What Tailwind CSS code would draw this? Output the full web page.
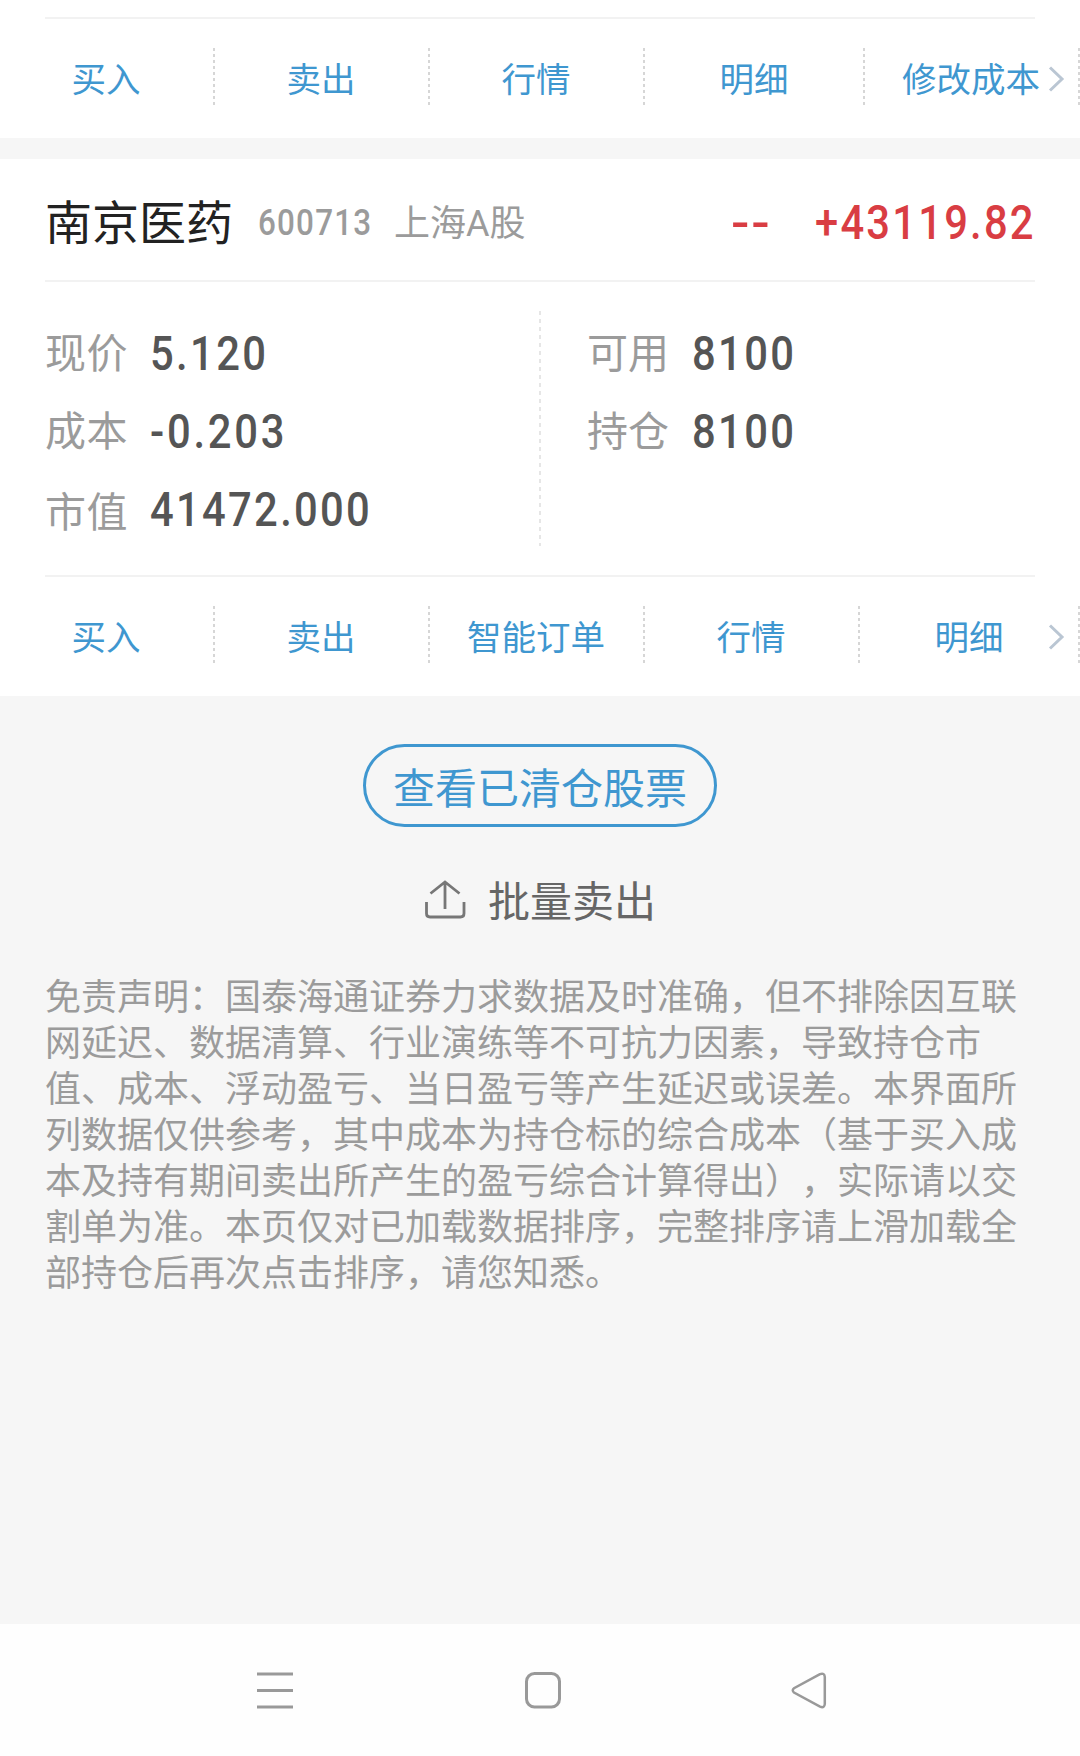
<!DOCTYPE html>
<html lang="zh-CN">
<head>
    <meta charset="UTF-8">
    <meta name="viewport" content="width=device-width, initial-scale=1.0">
    <title>持仓</title>
    <script src="https://cdn.jsdelivr.net/npm/@tailwindcss/browser@4"></script>
</head>
<body class="bg-[#f6f6f6] font-['Roboto','Noto_Sans_CJK_SC',sans-serif] [text-spacing-trim:space-all]">
    <div class="w-[1080px] h-[1756px] flex flex-col overflow-hidden">

        <!-- Previous holding: action bar -->
        <section class="bg-white pt-[17px]">
            <div class="mx-[45px] h-[2px] bg-[#f2f2f2]"></div>
            <nav class="relative flex h-[119px] pt-[29px] text-[34.5px] leading-[65px] text-[#3f97d0] text-center whitespace-nowrap">
                <a class="w-[212px]">买入</a>
                <i class="ml-px w-[2px] h-[58px] bg-[repeating-linear-gradient(#d6d6d6_0_3px,transparent_3px_6px)]"></i>
                <a class="w-[212px]">卖出</a>
                <i class="ml-px w-[2px] h-[58px] bg-[repeating-linear-gradient(#d6d6d6_0_3px,transparent_3px_6px)]"></i>
                <a class="w-[212px]">行情</a>
                <i class="ml-px w-[2px] h-[58px] bg-[repeating-linear-gradient(#d6d6d6_0_3px,transparent_3px_6px)]"></i>
                <a class="w-[218px]">明细</a>
                <i class="w-[2px] h-[58px] bg-[repeating-linear-gradient(#d6d6d6_0_3px,transparent_3px_6px)]"></i>
                <a class="w-[212px]">修改成本</a>
                <i class="ml-px w-[2px] h-[58px] bg-[repeating-linear-gradient(#d6d6d6_0_3px,transparent_3px_6px)]"></i>
                <svg class="absolute right-[15px] top-[46px]" width="17" height="28" viewBox="0 0 17 28" fill="none" stroke="#bac6d3" stroke-width="3"><path d="M2 2.500L14 14L2 25.500"/></svg>
            </nav>
        </section>

        <!-- Holding card -->
        <section class="mt-[21px] bg-white">
            <header class="mx-[45px] h-[121px] pt-[8px] flex items-center">
                <h1 class="w-[213px] text-[47px] leading-[60px] text-[#222]">南京医药</h1>
                <span class="w-[136px] text-[36.5px] font-medium text-[#9b9b9b] whitespace-nowrap"><b class="inline-block font-medium origin-left scale-x-[.86] tracking-[1.4px]">600713</b></span>
                <span class="text-[36px] text-[#9b9b9b]">上海A股</span>
                <div class="ml-auto flex text-[48.500px] font-medium text-[#d93d43] whitespace-nowrap">
                    <b class="inline-block w-[84px] font-medium origin-left scale-x-[1.12] tracking-[1.5px]">--</b>
                    <b class="inline-block w-[220px] font-medium origin-left scale-x-[.86] tracking-[2.6px]">+43119.82</b>
                </div>
            </header>
            <div class="mx-[45px] h-[2px] bg-[#f2f2f2]"></div>
            <div class="mx-[45px] h-[293px] pt-[29px] flex">
                <dl class="w-[494px] pt-[4px] flex flex-col text-[41px] leading-[78px] text-[#9b9b9b] whitespace-nowrap">
                    <div class="flex h-[78px]"><dt class="w-[105px] tracking-[.5px]">现价</dt><dd class="origin-left scale-x-[.86] text-[48.500px] font-medium tracking-[2.8px] text-[#555]">5.120</dd></div>
                    <div class="flex h-[78px]"><dt class="w-[105px] tracking-[.5px]">成本</dt><dd class="origin-left scale-x-[.86] text-[48.500px] font-medium tracking-[3.2px] text-[#555]">-0.203</dd></div>
                    <div class="flex h-[78px]"><dt class="w-[105px] pt-[3px] tracking-[.5px]">市值</dt><dd class="origin-left scale-x-[.86] text-[48.500px] font-medium tracking-[2.7px] text-[#555]">41472.000</dd></div>
                </dl>
                <i class="w-[2px] h-[235px] bg-[repeating-linear-gradient(#e6e6e6_0_4px,transparent_4px_8px)]"></i>
                <dl class="pt-[4px] pl-[46px] flex flex-col text-[41px] leading-[78px] text-[#9b9b9b] whitespace-nowrap">
                    <div class="flex h-[78px]"><dt class="w-[105px]">可用</dt><dd class="origin-left scale-x-[.86] text-[48.500px] font-medium tracking-[2.8px] text-[#555]">8100</dd></div>
                    <div class="flex h-[78px]"><dt class="w-[105px]">持仓</dt><dd class="origin-left scale-x-[.86] text-[48.500px] font-medium tracking-[2.8px] text-[#555]">8100</dd></div>
                </dl>
            </div>
            <div class="mx-[45px] h-[2px] bg-[#f2f2f2]"></div>
            <nav class="relative flex h-[119px] pt-[29px] text-[34.5px] leading-[65px] text-[#3f97d0] text-center whitespace-nowrap">
                <a class="w-[212px]">买入</a>
                <i class="ml-px w-[2px] h-[58px] bg-[repeating-linear-gradient(#d6d6d6_0_3px,transparent_3px_6px)]"></i>
                <a class="w-[212px]">卖出</a>
                <i class="ml-px w-[2px] h-[58px] bg-[repeating-linear-gradient(#d6d6d6_0_3px,transparent_3px_6px)]"></i>
                <a class="w-[212px]">智能订单</a>
                <i class="ml-px w-[2px] h-[58px] bg-[repeating-linear-gradient(#d6d6d6_0_3px,transparent_3px_6px)]"></i>
                <a class="w-[212px]">行情</a>
                <i class="ml-px w-[2px] h-[58px] bg-[repeating-linear-gradient(#d6d6d6_0_3px,transparent_3px_6px)]"></i>
                <a class="w-[218px]">明细</a>
                <i class="w-[2px] h-[58px] bg-[repeating-linear-gradient(#d6d6d6_0_3px,transparent_3px_6px)]"></i>
                <svg class="absolute right-[15px] top-[46px]" width="17" height="28" viewBox="0 0 17 28" fill="none" stroke="#bac6d3" stroke-width="3"><path d="M2 2.500L14 14L2 25.500"/></svg>
            </nav>
        </section>

        <!-- Footer actions and disclaimer -->
        <main class="flex-1 flex flex-col items-center pt-[48px]">
            <button class="w-[354px] h-[83px] pt-[4px] rounded-full border-[3px] border-[#3f97d0] text-[42px] leading-[73px] text-[#3f97d0] whitespace-nowrap"><span class="block pt-[2px]">查看已清仓股票</span></button>
            <button class="mt-[43px] h-[60px] flex items-center text-[42px] leading-[60px] text-[#666]">
                <svg class="mr-[22px]" width="42" height="42" viewBox="0 0 42 42" fill="none" stroke="#777" stroke-width="2.8"><path d="M2.500 23V34.500Q2.500 38 6 38H36.500Q40 38 40 34.500V23M21 30V3M6.500 14.500L21 3L35.500 14.500"/></svg>
                <span class="pt-[5px]">批量卖出</span>
            </button>
            <p class="mt-[45px] w-[990px] text-[36px] leading-[46px] text-[#9b9b9b] whitespace-nowrap">
                免责声明：国泰海通证券力求数据及时准确，但不排除因互联<br>
                网延迟、数据清算、行业演练等不可抗力因素，导致持仓市<br>
                值、成本、浮动盈亏、当日盈亏等产生延迟或误差。本界面所<br>
                列数据仅供参考，其中成本为持仓标的综合成本（基于买入成<br>
                本及持有期间卖出所产生的盈亏综合计算得出），实际请以交<br>
                割单为准。本页仅对已加载数据排序，完整排序请上滑加载全<br>
                部持仓后再次点击排序，请您知悉。
            </p>
        </main>

        <!-- System navigation bar -->
        <footer class="h-[132px] pl-[257px] pt-[47px] flex bg-[#fefefe]">
            <svg class="mr-[232px]" width="36" height="38" viewBox="0 0 36 38" fill="none" stroke="#999" stroke-width="3"><path d="M0 3H36M0 19.500H36M0 36H36"/></svg>
            <svg class="mr-[229px]" width="36" height="38" viewBox="0 0 36 38" fill="none" stroke="#999" stroke-width="3"><rect x="1.500" y="2.500" width="33" height="33.500" rx="8"/></svg>
            <svg width="38" height="38" viewBox="0 0 38 38" fill="none" stroke="#999" stroke-width="2.500"><path d="M30 3.100L4 17.200Q1.500 19.200 4 21.600L30 35.700Q34.500 37.500 34.800 33V6Q34.500 1.500 30 3.100Z"/></svg>
        </footer>
    </div>
</body>
</html>
